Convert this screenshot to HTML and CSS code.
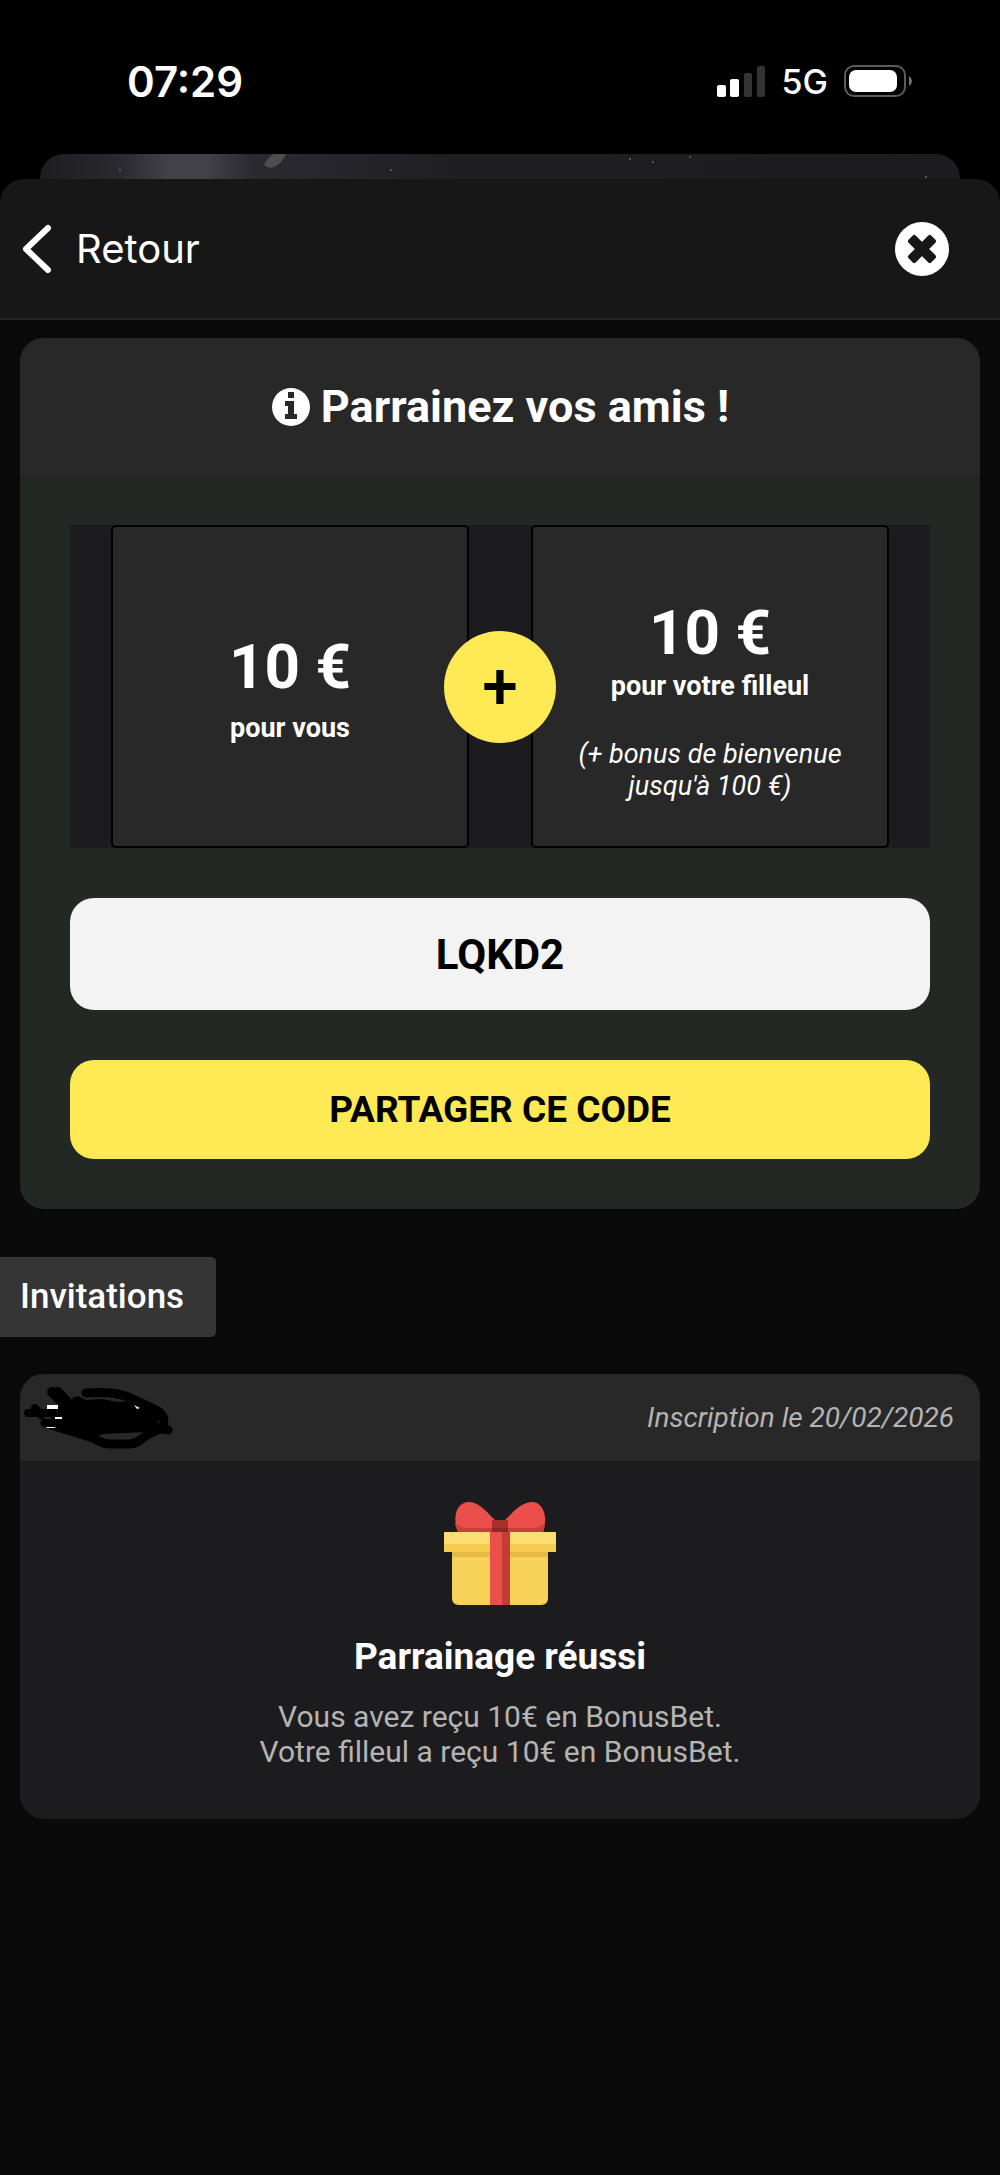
FILE: index.html
```html
<!DOCTYPE html>
<html lang="fr">
<head>
  <meta charset="UTF-8" />
  <meta name="viewport" content="width=device-width, initial-scale=1.0"/>
  <title>Parrainage</title>
  <link rel="stylesheet" href="styles.css">
</head>
<body>
  <!-- Barre d'état -->
  <div class="status-bar">
    <span class="time">07:29</span>
    <div class="status-icons">
      <svg class="signal" width="49" height="31" viewBox="0 0 49 31" aria-hidden="true">
        <rect x="0" y="19" width="9" height="12" rx="2" fill="#fff"/>
        <rect x="13" y="13" width="9" height="18" rx="2" fill="#fff"/>
        <rect x="27" y="7" width="8" height="24" rx="2" fill="#333"/>
        <rect x="40" y="0" width="8" height="31" rx="2" fill="#333"/>
      </svg>
      <span class="network">5G</span>
      <svg class="battery" width="69" height="32" viewBox="0 0 69 32" aria-hidden="true">
        <rect x="1" y="1" width="60" height="30" rx="9" fill="none" stroke="#5c5c5c" stroke-width="2"/>
        <rect x="5" y="5" width="48" height="22" rx="7" fill="#fff"/>
        <path d="M65 11q3 2 3 5t-3 5z" fill="#777"/>
      </svg>
    </div>
  </div>

  <!-- Page précédente, visible derrière -->
  <div class="sheet-behind">
    <svg width="920" height="25" viewBox="0 0 920 25" aria-hidden="true">
      <path d="M224 11q3-7 10-11h12q-3 8-10 12-6 4-12-1z" fill="#4c4c51"/>
      <g fill="#66666c">
        <circle cx="80" cy="16" r="1"/>
        <circle cx="351" cy="16" r="1"/>
        <circle cx="590" cy="5" r="1"/>
        <circle cx="613" cy="8" r="1"/>
        <circle cx="650" cy="3" r="1"/>
        <circle cx="886" cy="23" r="1"/>
      </g>
    </svg>
  </div>

  <div class="sheet">
    <header class="top-bar">
      <a class="back" href="#">
        <svg width="30" height="50" viewBox="0 0 30 50" aria-hidden="true">
          <path d="M26 4L4 25l22 21" fill="none" stroke="#fff" stroke-width="6" stroke-linecap="round" stroke-linejoin="round"/>
        </svg>
        Retour
      </a>
      <button class="close" type="button" aria-label="Fermer">
        <svg width="54" height="54" viewBox="0 0 54 54" aria-hidden="true">
          <circle cx="27" cy="27" r="27" fill="#fff"/>
          <g fill="#171717" transform="rotate(45 27 27)">
            <rect x="11" y="22" width="32" height="10" rx="2"/>
            <rect x="22" y="11" width="10" height="32" rx="2"/>
          </g>
        </svg>
      </button>
    </header>

    <main>
      <section class="card invite">
        <h1 class="card-title">
          <svg width="40" height="40" viewBox="0 0 40 40" aria-hidden="true">
            <circle cx="20" cy="20" r="19" fill="#fff"/>
            <path d="M17 5h6v6h-6zM14 14h9v13h3v5H14v-5h3v-8h-3z" fill="#282828"/>
          </svg>
          Parrainez vos amis !
        </h1>
        <div class="invite-body">
          <div class="rewards">
            <div class="reward">
              <strong class="amount">10 €</strong>
              <span class="who">pour vous</span>
            </div>
            <div class="reward friend">
              <strong class="amount">10 €</strong>
              <span class="who">pour votre filleul</span>
              <em class="bonus">(+ bonus de bienvenue jusqu'à 100 €)</em>
            </div>
            <div class="plus">+</div>
          </div>
          <input class="code" type="text" value="LQKD2" aria-label="Code de parrainage" readonly>
          <button class="share" type="button">PARTAGER CE CODE</button>
        </div>
      </section>

      <h2 class="tag">Invitations</h2>

      <section class="card invitation">
        <div class="invitation-head">
          <!-- Nom masqué -->
          <svg width="154" height="66" viewBox="0 0 154 66" role="img" aria-label="Nom masqué">
            <path d="M50 13l6-2 8 4 17-1 14 3 12-1 21 9 11 7-7 11-7 4-44 2-10 4-12-3-25-12-8-8 8-8 18-2z" fill="#000"/>
            <g fill="none" stroke="#000" stroke-linecap="round" stroke-linejoin="round">
              <path d="M6 28h34M13 23l6 7M23 38h16" stroke-width="8"/>
              <path d="M30 7l22 22M36 7l20 22" stroke-width="10"/>
              <path d="M64 8c18-1 32-1 47 6l23 11c8 4 9 10 7 15-3 6-10 6-16 10-7 5-11 9-17 9H88c-7 0-11-3-17-6L23 38" stroke-width="9"/>
              <path d="M130 42l16 3" stroke-width="9"/>
            </g>
            <path d="M79 13q9-2 18 3z" fill="#282828"/>
            <path d="M25 20h11v4H25zM33 32h7v2h-7zM24 42h8l2 1h-9zM112 20l6 3-3 1z" fill="#fff"/>
          </svg>
          <em class="date">Inscription le 20/02/2026</em>
        </div>
        <div class="invitation-body">
          <svg class="gift" width="112" height="104" viewBox="0 0 112 104" aria-hidden="true">
            <path d="M14 31C7 12 15 0 26 1c11 1 19 13 25 18h10C67 14 75 2 87 1c11-1 18 13 12 30z" fill="#eb4f4b"/>
            <path d="M11 21q3 6 12 6h66q9 0 12-6 0 5-2 10H14q-3-5-3-10z" fill="#c93e37"/>
            <path d="M48 19h16v12H48z" fill="#a93029"/>
            <path d="M48 27h16v4H48z" fill="#8d2824"/>
            <path d="M8 44h96v53q0 7-7 7H15q-7 0-7-7z" fill="#f8d158"/>
            <path d="M8 50h96v6H8z" fill="#e5ba45"/>
            <rect y="31" width="112" height="20" rx="1" fill="#fade73"/>
            <path d="M0 43h112v8H0z" fill="#f6cc50"/>
            <path d="M46 31h20v73H46z" fill="#eb4f4b"/>
            <path d="M58 31h8v73h-8z" fill="#c43d35"/>
          </svg>
          <h3 class="result">Parrainage réussi</h3>
          <p class="details">Vous avez reçu 10€ en BonusBet.<br>Votre filleul a reçu 10€ en BonusBet.</p>
        </div>
      </section>
    </main>
  </div>
</body>
</html>
```
FILE: styles.css
```css
* {
  box-sizing: border-box;
}
body {
  margin: 0;
  min-height: 100vh;
  display: flex;
  flex-direction: column;
  background: #000;
  color: #fff;
  font-family: Roboto, sans-serif;
}
h1, h2, h3, p {
  margin: 0;
}
svg {
  display: block;
  flex-shrink: 0;
}
button {
  border: none;
  padding: 0;
  cursor: pointer;
  font-family: inherit;
}

/* Barre d'état */
.status-bar {
  height: 154px;
  padding: 8px 87px 0 127px;
  display: flex;
  justify-content: space-between;
  align-items: center;
  font-family: Inter, sans-serif;
}
.time {
  font-size: 42px;
  font-weight: 600;
}
.status-icons {
  display: flex;
  align-items: center;
  gap: 16px;
}
.network {
  font-size: 34px;
  font-weight: 500;
}

/* Feuille modale */
.sheet-behind {
  height: 25px;
  margin: 0 40px;
  overflow: hidden;
  border-radius: 24px 24px 0 0;
  background: linear-gradient(90deg, #1c1c21, #2a2a30 9%, #414147 14%, #414147 18%, #2a2a30 23%, #27272d 30%, #1e1e23 45%, #1b1b20);
}
.sheet {
  flex: 1;
  overflow: hidden;
  border-radius: 24px 24px 0 0;
  background: #0a0a0a;
}
.top-bar {
  height: 141px;
  padding: 0 51px 0 22px;
  display: flex;
  justify-content: space-between;
  align-items: center;
  background: #171717;
  border-bottom: 2px solid #222;
}
.back {
  display: flex;
  align-items: center;
  gap: 24px;
  color: #fff;
  font-family: Inter, sans-serif;
  font-size: 40px;
  text-decoration: none;
}
.close {
  background: none;
}

/* Cartes */
.card {
  margin: 0 20px;
  overflow: hidden;
  border-radius: 24px;
}
.invite {
  margin-top: 18px;
  background: #242824;
}
.card-title {
  height: 137px;
  display: flex;
  justify-content: center;
  align-items: center;
  gap: 10px;
  background: #282828;
  font-size: 45px;
  font-weight: 700;
}
.invite-body {
  padding: 50px;
  display: flex;
  flex-direction: column;
  gap: 50px;
}

/* Récompenses */
.rewards {
  position: relative;
  padding: 0 41px;
  display: grid;
  grid-template-columns: 1fr 1fr;
  gap: 62px;
  background: #1c1c1e;
}
.reward {
  padding: 44px 30px;
  display: flex;
  flex-direction: column;
  align-items: center;
  justify-content: center;
  gap: 8px;
  background: #282828;
  border: 2px solid #000;
  border-radius: 5px;
  text-align: center;
}
.friend {
  padding-top: 68px;
  gap: 0;
}
.amount {
  font-size: 62px;
  line-height: 75px;
}
.who {
  font-size: 27px;
  font-weight: 700;
  line-height: 32px;
}
.bonus {
  margin-top: 36px;
  font-size: 27px;
  line-height: 32px;
}
.plus {
  position: absolute;
  top: 50%;
  left: 50%;
  transform: translate(-50%, -50%);
  width: 112px;
  height: 112px;
  border-radius: 50%;
  background: #fce953;
  color: #000;
  font-size: 64px;
  font-weight: 500;
  line-height: 112px;
  text-align: center;
}
.code, .share {
  width: 100%;
  border: none;
  border-radius: 24px;
  color: #000;
  font-family: inherit;
  font-weight: 700;
  text-align: center;
}
.code {
  height: 112px;
  background: #f3f3f3;
  font-size: 42px;
}
.share {
  height: 99px;
  background: #fce953;
  font-size: 37px;
}

/* Invitations */
.tag {
  width: fit-content;
  margin: 48px 0 37px;
  padding: 0 32px 0 20px;
  background: #353535;
  border-radius: 0 5px 5px 0;
  font-size: 35px;
  font-weight: 500;
  line-height: 80px;
}
.invitation {
  background: #1c1c1e;
}
.invitation-head {
  height: 87px;
  padding: 0 26px 0 2px;
  display: flex;
  justify-content: space-between;
  align-items: center;
  background: #282828;
}
.date {
  color: #b4b4b4;
  font-size: 28px;
}
.invitation-body {
  padding: 40px 20px 50px;
  display: flex;
  flex-direction: column;
  align-items: center;
  text-align: center;
}
.result {
  margin: 31px 0 21px;
  font-size: 37px;
  font-weight: 700;
  line-height: 42px;
}
.details {
  color: #b4b4b4;
  font-size: 30px;
  line-height: 35px;
}
```
